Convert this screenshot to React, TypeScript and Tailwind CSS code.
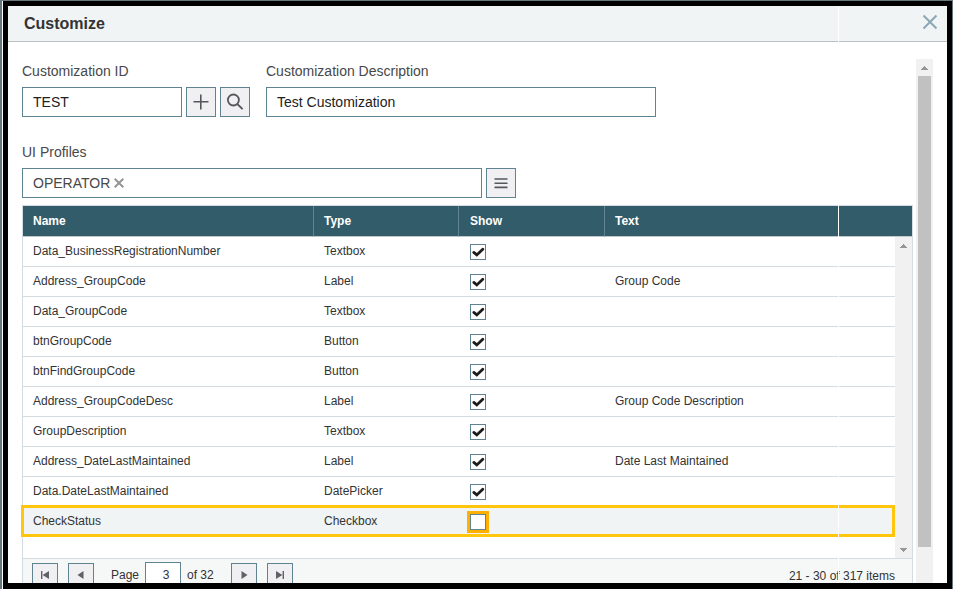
import React, { useState } from 'react';

interface ControlRow {
  name: string;
  type: string;
  show: boolean;
  text: string;
}

const initialRows: ControlRow[] = [
  { name: 'Data_BusinessRegistrationNumber', type: 'Textbox', show: true, text: '' },
  { name: 'Address_GroupCode', type: 'Label', show: true, text: 'Group Code' },
  { name: 'Data_GroupCode', type: 'Textbox', show: true, text: '' },
  { name: 'btnGroupCode', type: 'Button', show: true, text: '' },
  { name: 'btnFindGroupCode', type: 'Button', show: true, text: '' },
  { name: 'Address_GroupCodeDesc', type: 'Label', show: true, text: 'Group Code Description' },
  { name: 'GroupDescription', type: 'Textbox', show: true, text: '' },
  { name: 'Address_DateLastMaintained', type: 'Label', show: true, text: 'Date Last Maintained' },
  { name: 'Data.DateLastMaintained', type: 'DatePicker', show: true, text: '' },
  { name: 'CheckStatus', type: 'Checkbox', show: false, text: '' },
];

const selectedName = 'CheckStatus';

interface IconButtonProps {
  label: string;
  children: React.ReactNode;
}

const IconButton: React.FC<IconButtonProps> = ({ label, children }) => (
  <button
    type="button"
    aria-label={label}
    className="flex h-[30px] w-[30px] shrink-0 items-center justify-center border border-[#5f8391] bg-[#f0f0f2]"
  >
    {children}
  </button>
);

const PagerButton: React.FC<IconButtonProps> = ({ label, children }) => (
  <button
    type="button"
    aria-label={label}
    className="flex h-6 w-[26px] shrink-0 items-center justify-center border border-[#5f8391] bg-[#f0f0f2]"
  >
    <svg width="8" height="8" viewBox="0 0 8 8" fill="#606166">
      {children}
    </svg>
  </button>
);

const ScrollArrow: React.FC<{ down?: boolean }> = ({ down }) => (
  <div className="flex h-[17px] shrink-0 items-center justify-center">
    <svg width="7" height="4" viewBox="0 0 7 4" fill="#969696" shapeRendering="crispEdges">
      <path d={down ? 'M0 0h7v1H0zM1 1h5v1H1zM2 2h3v1H2zM3 3h1v1H3z' : 'M3 0h1v1H3zM2 1h3v1H2zM1 2h5v1H1zM0 3h7v1H0z'} />
    </svg>
  </div>
);

const App: React.FC = () => {
  const [rows, setRows] = useState<ControlRow[]>(initialRows);
  const [customizationId, setCustomizationId] = useState<string>('TEST');
  const [description, setDescription] = useState<string>('Test Customization');
  const [page, setPage] = useState<string>('3');

  const toggleShow = (name: string) => {
    setRows(rows.map((row) => (row.name === name ? { ...row, show: !row.show } : row)));
  };

  return (
    <div className="h-screen overflow-hidden bg-[#66777e] pt-px pr-px pl-[2px] font-['Liberation_Sans',Arial,sans-serif] text-[#333]">
      <div className="h-full border-l border-white">
        <div className="relative flex h-full flex-col overflow-hidden border-[5px] border-b-[6px] border-black bg-white">
          <header className="flex h-9 shrink-0 items-center justify-between border-b border-[#b9bfc2] bg-[#f0f4f5] pr-[9px] pl-4">
            <h1 className="text-base font-bold">Customize</h1>
            <button type="button" aria-label="Close" className="mb-[3px]">
              <svg width="16" height="16" viewBox="0 0 16 16" stroke="#8aa8b5" strokeWidth="2">
                <path d="M1.5 1.5l13 13M14.5 1.5l-13 13" />
              </svg>
            </button>
          </header>

          <div className="flex min-h-0 flex-1 gap-[3px] overflow-hidden pt-[17px] pr-[14px] pl-[14px]">
            <main className="min-w-0 flex-1">
              <div className="flex gap-4">
                <div>
                  <label htmlFor="customization-id" className="block text-sm leading-6 text-[#484848]">
                    Customization ID
                  </label>
                  <div className="mt-1 flex gap-1">
                    <input
                      id="customization-id"
                      type="text"
                      value={customizationId}
                      onChange={(e) => setCustomizationId(e.target.value)}
                      className="h-[30px] w-40 border border-[#5f8391] px-[10px] text-sm text-[#222]"
                    />
                    <IconButton label="Add">
                      <svg width="16" height="16" viewBox="0 0 16 16" stroke="#55575b" strokeWidth="1.6">
                        <path d="M7.8 .5v15M.5 7.8h15" />
                      </svg>
                    </IconButton>
                    <IconButton label="Find">
                      <svg width="18" height="18" viewBox="0 0 18 18" fill="none" stroke="#55575b">
                        <circle cx="7.4" cy="7" r="5.5" strokeWidth="1.8" />
                        <path d="M11.4 11.1l5.2 5" strokeWidth="2" />
                      </svg>
                    </IconButton>
                  </div>
                </div>
                <div className="min-w-0">
                  <label htmlFor="customization-description" className="block text-sm leading-6 text-[#484848]">
                    Customization Description
                  </label>
                  <input
                    id="customization-description"
                    type="text"
                    value={description}
                    onChange={(e) => setDescription(e.target.value)}
                    className="mt-1 block h-[30px] w-[390px] max-w-full border border-[#5f8391] px-[10px] text-sm text-[#222]"
                  />
                </div>
              </div>

              <div className="mt-[23px]">
                <label htmlFor="ui-profiles" className="block text-sm leading-6 text-[#484848]">
                  UI Profiles
                </label>
                <div className="mt-1 flex gap-1">
                  <div className="flex h-[30px] w-[460px] items-center gap-1 border border-[#5f8391] px-[10px] text-sm">
                    <span className="text-[#484848]">OPERATOR</span>
                    <button type="button" aria-label="Remove OPERATOR">
                      <svg width="10" height="10" viewBox="0 0 10 10" stroke="#959595" strokeWidth="2">
                        <path d="M.7 .7l8.6 8.6M9.3 .7L.7 9.3" />
                      </svg>
                    </button>
                    <input id="ui-profiles" type="text" className="min-w-0 flex-1 outline-none" />
                  </div>
                  <IconButton label="Select profiles">
                    <svg width="14" height="12" viewBox="0 0 14 12" stroke="#55575b" strokeWidth="1.6">
                      <path d="M.5 2h13M.5 6.2h13M.5 10.4h13" />
                    </svg>
                  </IconButton>
                </div>
              </div>

              <div className="mt-[7px] border border-[#d3dde1]">
                <div className="flex">
                  <table className="w-full min-w-0 flex-1 table-fixed border-separate border-spacing-0 text-left text-xs">
                    <colgroup>
                      <col className="w-[291px]" />
                      <col className="w-[145px]" />
                      <col className="w-[146px]" />
                      <col />
                    </colgroup>
                    <thead>
                      <tr className="h-[31px] bg-[#335c6b] text-white">
                        <th className="border-r border-b border-r-[#648390] border-b-[#c0c8cb] px-[10px]">Name</th>
                        <th className="border-r border-b border-r-[#648390] border-b-[#c0c8cb] px-[10px]">Type</th>
                        <th className="border-r border-b border-r-[#648390] border-b-[#c0c8cb] px-[11px]">Show</th>
                        <th className="border-b border-b-[#c0c8cb] px-[10px]">Text</th>
                      </tr>
                    </thead>
                    <tbody>
                      {rows.map((row) => {
                        const selected = row.name === selectedName;
                        return (
                          <tr key={row.name} className={selected ? 'relative h-[30px] bg-[#f0f4f5]' : 'h-[30px]'}>
                            <td className="border-b border-[#d3dde1] px-[10px] pb-[2px]">
                              {row.name}
                              {selected && (
                                <span className="pointer-events-none absolute -top-[2px] right-0 bottom-0 -left-[2px] border-[3px] border-[#ffc60d]" />
                              )}
                            </td>
                            <td className="border-b border-[#d3dde1] px-[10px] pb-[2px]">{row.type}</td>
                            <td className="border-b border-[#d3dde1] px-[11px]">
                              <div className="relative h-4 w-4">
                                <input
                                  type="checkbox"
                                  aria-label={`Show ${row.name}`}
                                  checked={row.show}
                                  onChange={() => toggleShow(row.name)}
                                  className={
                                    selected
                                      ? 'block h-4 w-4 appearance-none border border-[#5f8391] bg-white outline-3 outline-[#ffb000]'
                                      : 'block h-4 w-4 appearance-none border border-[#5f8391] bg-white'
                                  }
                                />
                                {row.show && (
                                  <svg
                                    className="pointer-events-none absolute inset-0"
                                    width="16"
                                    height="16"
                                    viewBox="0 0 16 16"
                                    fill="none"
                                    stroke="#1c1c1c"
                                    strokeWidth="2.8"
                                    strokeLinecap="round"
                                  >
                                    <path d="M3.8 8.4l3 2.5 6-5.7" />
                                  </svg>
                                )}
                              </div>
                            </td>
                            <td className="border-b border-[#d3dde1] px-[10px] pb-[2px]">{row.text}</td>
                          </tr>
                        );
                      })}
                    </tbody>
                  </table>
                  <div className="flex w-[17px] shrink-0 flex-col">
                    <div className="h-[31px] shrink-0 border-b border-[#c0c8cb] bg-[#335c6b]" />
                    <div className="flex-1 bg-[#f1f1f1]">
                      <ScrollArrow />
                    </div>
                  </div>
                </div>
                <div className="flex h-[21px] justify-end">
                  <div className="flex w-[17px] flex-col justify-end bg-[#f1f1f1]">
                    <ScrollArrow down />
                  </div>
                </div>

                <div className="flex items-center border-t border-[#d3dde1] bg-[#f6f8f8] py-[3px] pr-[17px] pl-[9px] text-xs">
                  <div className="flex gap-[10px]">
                    <PagerButton label="First page">
                      <path d="M0 0h1.4v8H0zM8 0v8L1.6 4z" />
                    </PagerButton>
                    <PagerButton label="Previous page">
                      <path d="M6.5 0v8L.5 4z" />
                    </PagerButton>
                  </div>
                  <label htmlFor="page-number" className="ml-[17px] leading-4">
                    Page
                  </label>
                  <input
                    id="page-number"
                    type="text"
                    value={page}
                    onChange={(e) => setPage(e.target.value)}
                    className="ml-[6px] h-[26px] w-9 border border-[#5f8391] bg-white pl-[6px] text-center"
                  />
                  <span className="ml-[6px] leading-4">of 32</span>
                  <div className="ml-[17px] flex gap-[10px]">
                    <PagerButton label="Next page">
                      <path d="M1.5 0v8l6-4z" />
                    </PagerButton>
                    <PagerButton label="Last page">
                      <path d="M6.6 0H8v8H6.6zM0 0v8l6.4-4z" />
                    </PagerButton>
                  </div>
                  <span className="ml-auto pt-[2px] leading-4">21 - 30 of 317 items</span>
                </div>
              </div>
            </main>

            <div className="flex w-[17px] shrink-0 flex-col bg-[#f1f1f1]">
              <ScrollArrow />
              <div className="mx-[2px] mb-9 flex-1 bg-[#c1c1c1]" />
            </div>
          </div>

          <div className="pointer-events-none absolute top-0 right-[108px] bottom-0 w-px bg-white" />
        </div>
      </div>
    </div>
  );
};

export default App;
